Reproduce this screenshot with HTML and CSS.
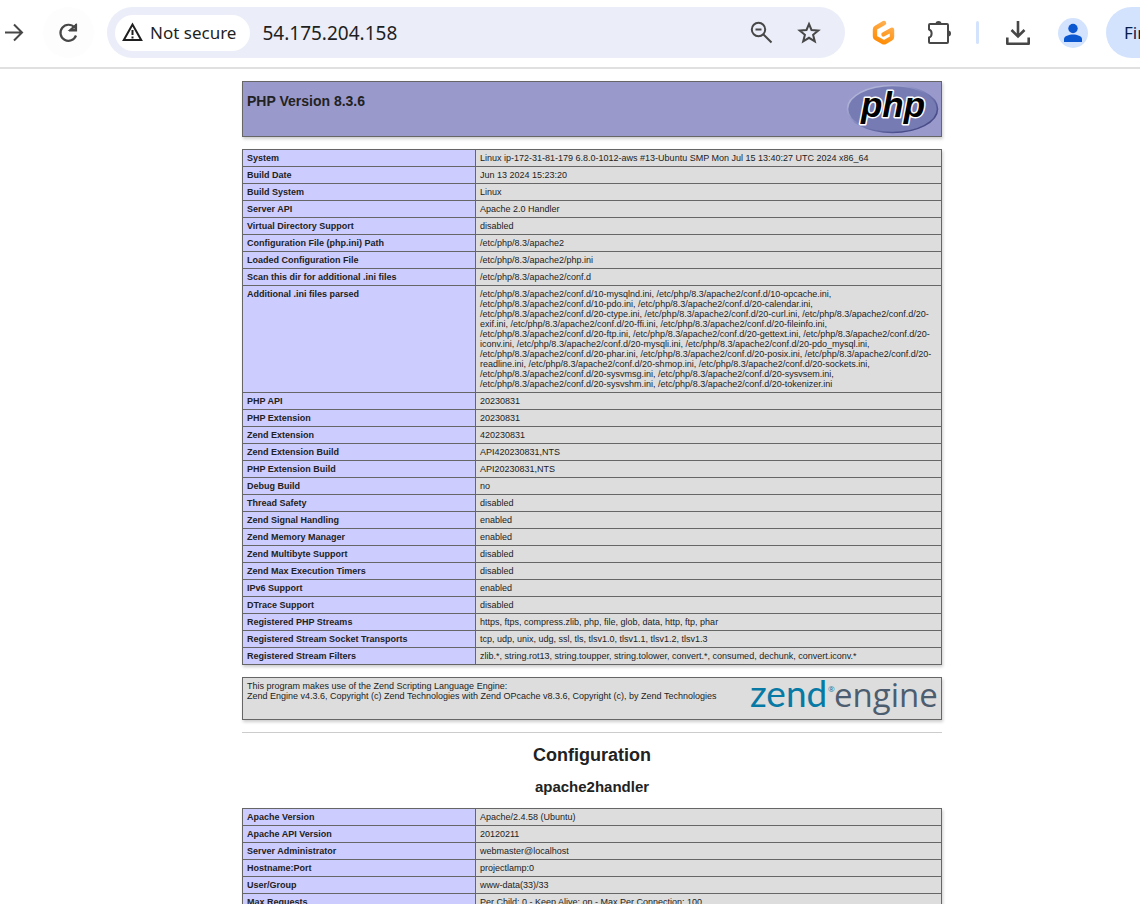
FILE: index.html
```html
<!DOCTYPE html>
<html lang="en">
<head>
<meta charset="utf-8">
<title>PHP 8.3.6 - phpinfo()</title>
<link rel="stylesheet" href="styles.css">
</head>
<body>
<header class="toolbar">
  <button class="nav-button forward" type="button" aria-label="Forward">
    <svg width="24" height="24" viewBox="0 0 24 24" fill="none" stroke="#474747" stroke-width="2"><path d="M3 11.500h17M12 3.500l8 8-8 8"/></svg>
  </button>
  <button class="nav-button reload" type="button" aria-label="Reload">
    <svg width="24" height="24" viewBox="0 0 24 24" fill="none" stroke="#474747" stroke-width="2.200"><path d="M19 14.500A8 8 0 1 1 17.500 6.500"/><path d="M19 3v6.500h-7M18.500 4.500v4.500h-5z"/></svg>
  </button>
  <div class="omnibox">
    <button class="security" type="button">
      <svg width="22" height="22" viewBox="0 0 22 22" fill="none" stroke="#1f1f1f"><path stroke-width="2" d="M10.500 2.500L1.800 18h17.400z"/><path stroke-width="2" d="M10.500 8v5M10.500 14.500v2"/></svg>
      <span>Not secure</span>
    </button>
    <input class="address" type="text" aria-label="Address" value="54.175.204.158">
    <button class="icon-button" type="button" aria-label="Zoom">
      <svg width="24" height="24" viewBox="0 0 24 24" fill="none" stroke="#474747" stroke-width="2"><circle cx="9.500" cy="8.500" r="6.700"/><path d="M14.500 13.500l8 8M6.500 8.500h6"/></svg>
    </button>
    <button class="icon-button" type="button" aria-label="Bookmark this tab">
      <svg width="24" height="24" viewBox="0 0 24 24" fill="none" stroke="#474747" stroke-width="2"><path d="M12 3l2.500 6 6.800.5-5.200 4.300 1.700 6.600-5.800-3.600-5.800 3.600 1.700-6.600-5.200-4.300L9.500 9z"/></svg>
    </button>
  </div>
  <div class="actions">
    <button class="icon-button" type="button" aria-label="Gitpod">
      <svg width="24" height="26" viewBox="0 0 24 26" fill="none" stroke="url(#orange)" stroke-width="4.400" stroke-linejoin="round" stroke-linecap="round"><defs><linearGradient id="orange" gradientUnits="userSpaceOnUse" x1="18" y1="1" x2="7" y2="24"><stop offset="0" stop-color="#ffb45b"/><stop offset="1" stop-color="#ff8a00"/></linearGradient></defs><path d="M12 3L4 7.600Q3 8.200 3 9.400v7q0 1 1 1.600l7 4q1 .6 2 0l6-3.500q1-.6 1-1.600V9.800l-8.500 4.600"/></svg>
    </button>
    <button class="icon-button" type="button" aria-label="Extensions">
      <svg width="26" height="26" viewBox="0 0 26 26"><path fill="none" stroke="#474747" stroke-width="2" stroke-linejoin="round" d="M3 5q0-1 1-1h17q1 0 1 1v17q0 1-1 1H4q-1 0-1-1v-4.500c3.500-1 3.500-7 0-8z"/><path fill="#474747" d="M9.500 4a3 3 0 0 1 6 0zM22 10.500a3 3 0 0 1 0 6z"/></svg>
    </button>
    <span class="divider"></span>
    <button class="icon-button" type="button" aria-label="Downloads">
      <svg width="26" height="26" viewBox="0 0 26 26" fill="none" stroke="#474747"><path stroke-width="2.600" d="M13 1v15M6.500 10l6.500 6.500L19.500 10"/><path stroke-width="2.600" stroke-linejoin="round" d="M2.300 17.500v6.200h21.400v-6.200"/></svg>
    </button>
    <button class="avatar" type="button" aria-label="Profile">
      <svg width="30" height="30" viewBox="0 0 30 30" fill="#0b57d0"><circle cx="15" cy="10.500" r="4.700"/><path d="M6 24v-3c0-3 5-4.500 9-4.500s9 1.500 9 4.500v3z"/></svg>
    </button>
    <div class="update-slot"><button class="update" type="button">Finish update</button></div>
  </div>
</header>

<main class="viewport">
  <div class="center">
    <section class="banner">
      <h1 class="version">PHP Version 8.3.6</h1>
      <svg class="php-logo" width="92" height="50" viewBox="0 0 92 50" role="img" aria-label="PHP logo">
        <defs><linearGradient id="rim" x1="0" y1="0" x2="1" y2="1"><stop offset=".2" stop-color="#aeb2d5"/><stop offset=".5" stop-color="#7a7fb8"/><stop offset=".8" stop-color="#484c89"/></linearGradient></defs>
        <ellipse cx="45.500" cy="25" rx="45" ry="23.500" fill="#777bb3" stroke="url(#rim)" stroke-width="1.600"/>
        <text class="php-text" x="46" y="33" text-anchor="middle">php</text>
      </svg>
    </section>

    <table class="info">
      <tr><th scope="row">System</th><td>Linux ip-172-31-81-179 6.8.0-1012-aws #13-Ubuntu SMP Mon Jul 15 13:40:27 UTC 2024 x86_64</td></tr>
      <tr><th scope="row">Build Date</th><td>Jun 13 2024 15:23:20</td></tr>
      <tr><th scope="row">Build System</th><td>Linux</td></tr>
      <tr><th scope="row">Server API</th><td>Apache 2.0 Handler</td></tr>
      <tr><th scope="row">Virtual Directory Support</th><td>disabled</td></tr>
      <tr><th scope="row">Configuration File (php.ini) Path</th><td>/etc/php/8.3/apache2</td></tr>
      <tr><th scope="row">Loaded Configuration File</th><td>/etc/php/8.3/apache2/php.ini</td></tr>
      <tr><th scope="row">Scan this dir for additional .ini files</th><td>/etc/php/8.3/apache2/conf.d</td></tr>
      <tr><th scope="row">Additional .ini files parsed</th><td class="files">/etc/php/8.3/apache2/conf.d/10-mysqlnd.ini, /etc/php/8.3/apache2/conf.d/10-opcache.ini,<br>/etc/php/8.3/apache2/conf.d/10-pdo.ini, /etc/php/8.3/apache2/conf.d/20-calendar.ini,<br>/etc/php/8.3/apache2/conf.d/20-ctype.ini, /etc/php/8.3/apache2/conf.d/20-curl.ini, /etc/php/8.3/apache2/conf.d/20-<br>exif.ini, /etc/php/8.3/apache2/conf.d/20-ffi.ini, /etc/php/8.3/apache2/conf.d/20-fileinfo.ini,<br>/etc/php/8.3/apache2/conf.d/20-ftp.ini, /etc/php/8.3/apache2/conf.d/20-gettext.ini, /etc/php/8.3/apache2/conf.d/20-<br>iconv.ini, /etc/php/8.3/apache2/conf.d/20-mysqli.ini, /etc/php/8.3/apache2/conf.d/20-pdo_mysql.ini,<br>/etc/php/8.3/apache2/conf.d/20-phar.ini, /etc/php/8.3/apache2/conf.d/20-posix.ini, /etc/php/8.3/apache2/conf.d/20-<br>readline.ini, /etc/php/8.3/apache2/conf.d/20-shmop.ini, /etc/php/8.3/apache2/conf.d/20-sockets.ini,<br>/etc/php/8.3/apache2/conf.d/20-sysvmsg.ini, /etc/php/8.3/apache2/conf.d/20-sysvsem.ini,<br>/etc/php/8.3/apache2/conf.d/20-sysvshm.ini, /etc/php/8.3/apache2/conf.d/20-tokenizer.ini</td></tr>
      <tr><th scope="row">PHP API</th><td>20230831</td></tr>
      <tr><th scope="row">PHP Extension</th><td>20230831</td></tr>
      <tr><th scope="row">Zend Extension</th><td>420230831</td></tr>
      <tr><th scope="row">Zend Extension Build</th><td>API420230831,NTS</td></tr>
      <tr><th scope="row">PHP Extension Build</th><td>API20230831,NTS</td></tr>
      <tr><th scope="row">Debug Build</th><td>no</td></tr>
      <tr><th scope="row">Thread Safety</th><td>disabled</td></tr>
      <tr><th scope="row">Zend Signal Handling</th><td>enabled</td></tr>
      <tr><th scope="row">Zend Memory Manager</th><td>enabled</td></tr>
      <tr><th scope="row">Zend Multibyte Support</th><td>disabled</td></tr>
      <tr><th scope="row">Zend Max Execution Timers</th><td>disabled</td></tr>
      <tr><th scope="row">IPv6 Support</th><td>enabled</td></tr>
      <tr><th scope="row">DTrace Support</th><td>disabled</td></tr>
      <tr><th scope="row">Registered PHP Streams</th><td>https, ftps, compress.zlib, php, file, glob, data, http, ftp, phar</td></tr>
      <tr><th scope="row">Registered Stream Socket Transports</th><td>tcp, udp, unix, udg, ssl, tls, tlsv1.0, tlsv1.1, tlsv1.2, tlsv1.3</td></tr>
      <tr><th scope="row">Registered Stream Filters</th><td>zlib.*, string.rot13, string.toupper, string.tolower, convert.*, consumed, dechunk, convert.iconv.*</td></tr>
    </table>

    <section class="credits">
      <p class="credits-text">This program makes use of the Zend Scripting Language Engine:<br>Zend Engine v4.3.6, Copyright (c) Zend Technologies with Zend OPcache v8.3.6, Copyright (c), by Zend Technologies</p>
      <svg class="zend-logo" width="192" height="41" viewBox="0 0 192 41" role="img" aria-label="Zend engine">
        <text class="zend-name" x="1" y="29">zend</text>
        <text class="zend-mark" x="79" y="14">®</text>
        <text class="zend-engine" x="85" y="29">engine</text>
      </svg>
    </section>

    <hr class="rule">
    <h1 class="title">Configuration</h1>
    <h2 class="subtitle">apache2handler</h2>
    <table class="info">
      <tr><th scope="row">Apache Version</th><td>Apache/2.4.58 (Ubuntu)</td></tr>
      <tr><th scope="row">Apache API Version</th><td>20120211</td></tr>
      <tr><th scope="row">Server Administrator</th><td>webmaster@localhost</td></tr>
      <tr><th scope="row">Hostname:Port</th><td>projectlamp:0</td></tr>
      <tr><th scope="row">User/Group</th><td>www-data(33)/33</td></tr>
      <tr><th scope="row">Max Requests</th><td>Per Child: 0 - Keep Alive: on - Max Per Connection: 100</td></tr>
    </table>
  </div>
</main>
</body>
</html>
```
FILE: styles.css
```css
* { box-sizing: border-box; }

body {
  margin: 0;
  height: 100vh;
  display: flex;
  flex-direction: column;
  overflow: hidden;
  background: #fff;
  color: #222;
  font-family: "Liberation Sans", Arial, sans-serif;
}

svg { display: block; flex: none; overflow: visible; }

button {
  margin: 0;
  padding: 0;
  border: 0;
  background: none;
  color: inherit;
  font: inherit;
}

/* Browser toolbar */
.toolbar {
  flex: none;
  display: flex;
  align-items: center;
  padding: 7px 0 9px 2px;
  border-bottom: 2px solid #e0e0e0;
  overflow: hidden;
  color: #1f1f1f;
  font-family: "Noto Sans", "Open Sans", sans-serif;
}
.nav-button {
  display: flex;
  align-items: center;
  justify-content: center;
  height: 51px;
}
.forward { width: 24px; }
.reload {
  width: 51px;
  margin: 0 13px 0 17px;
  border-radius: 50%;
  background: #fdfdfd;
}
.omnibox {
  flex: 1;
  min-width: 0;
  height: 51px;
  display: flex;
  align-items: center;
  gap: 24px;
  padding: 0 24px 0 8px;
  border-radius: 26px;
  background: #ebeef8;
}
.security {
  flex: none;
  display: flex;
  align-items: center;
  gap: 6px;
  height: 36px;
  padding: 0 14px 0 7px;
  border-radius: 18px;
  background: #fff;
  font-size: 17px;
}
.address {
  flex: 1;
  min-width: 0;
  margin-left: -12px;
  padding: 0;
  border: 0;
  outline: 0;
  background: none;
  color: #1f1f1f;
  font: 19px "Noto Sans", "Open Sans", sans-serif;
}
.actions {
  flex: none;
  display: flex;
  align-items: center;
  padding-left: 27px;
  gap: 27px;
}
.icon-button { flex: none; }
.actions .icon-button + .icon-button { margin-left: 3px; }
.divider {
  width: 3px;
  height: 23px;
  margin-left: -3px;
  border-radius: 2px;
  background: #d3e3fd;
}
.divider + .icon-button { margin-left: -1px; }
.avatar {
  width: 30px;
  height: 30px;
  border-radius: 50%;
  background: #d3e3fd;
}
.update-slot {
  width: 34px;
  margin-left: -9px;
}
.update {
  height: 51px;
  padding: 0 20px 0 18px;
  border-radius: 26px;
  background: #d3e3fd;
  color: #041e49;
  font-size: 17px;
  white-space: nowrap;
}

/* phpinfo page */
.viewport {
  flex: 1;
  min-height: 0;
  overflow: hidden;
  padding: 12px 0 0 44px;
}
.center {
  max-width: 700px;
  margin: 0 auto;
}
.banner,
.credits {
  display: flex;
  align-items: flex-start;
  justify-content: space-between;
  border: 1px solid #666;
  box-shadow: 1px 2px 3px rgba(0, 0, 0, .2);
}
.banner {
  padding: 2px;
  background: #99c;
}
.version {
  margin: 0;
  padding: 9px 2px;
  font-size: 14px;
  line-height: 16px;
}
.php-text {
  font: italic bold 35px "Liberation Sans", Arial, sans-serif;
  fill: #000;
  stroke: #fff;
  stroke-width: 3px;
  stroke-linejoin: round;
  paint-order: stroke;
}
.info {
  width: 100%;
  margin: 12px 0;
  border-collapse: collapse;
  background: #ddd;
  box-shadow: 1px 2px 3px rgba(0, 0, 0, .2);
  font-size: 9px;
  line-height: 10px;
}
.info th,
.info td {
  padding: 3px 4px;
  border: 1px solid #666;
  text-align: left;
  vertical-align: top;
}
.info th {
  width: 233px;
  background: #ccf;
}
.files { white-space: nowrap; }
.credits {
  background: #ddd;
  font-size: 9px;
  line-height: 10px;
}
.credits-text {
  margin: 0;
  padding: 3px 4px;
}
.zend-name {
  font: 37px Lato, sans-serif;
  fill: #0679a5;
}
.zend-mark {
  font: 8px "Open Sans", sans-serif;
  fill: #0679a5;
}
.zend-engine {
  font: 33px "Open Sans", sans-serif;
  fill: #4d5d70;
}
.rule {
  height: 1px;
  margin: 12px 0 0;
  border: 0;
  background: #ccc;
}
.title,
.subtitle {
  margin: 12px 0;
  text-align: center;
}
.title {
  font-size: 18px;
  line-height: 20px;
}
.subtitle {
  font-size: 15px;
  line-height: 19px;
}
```
